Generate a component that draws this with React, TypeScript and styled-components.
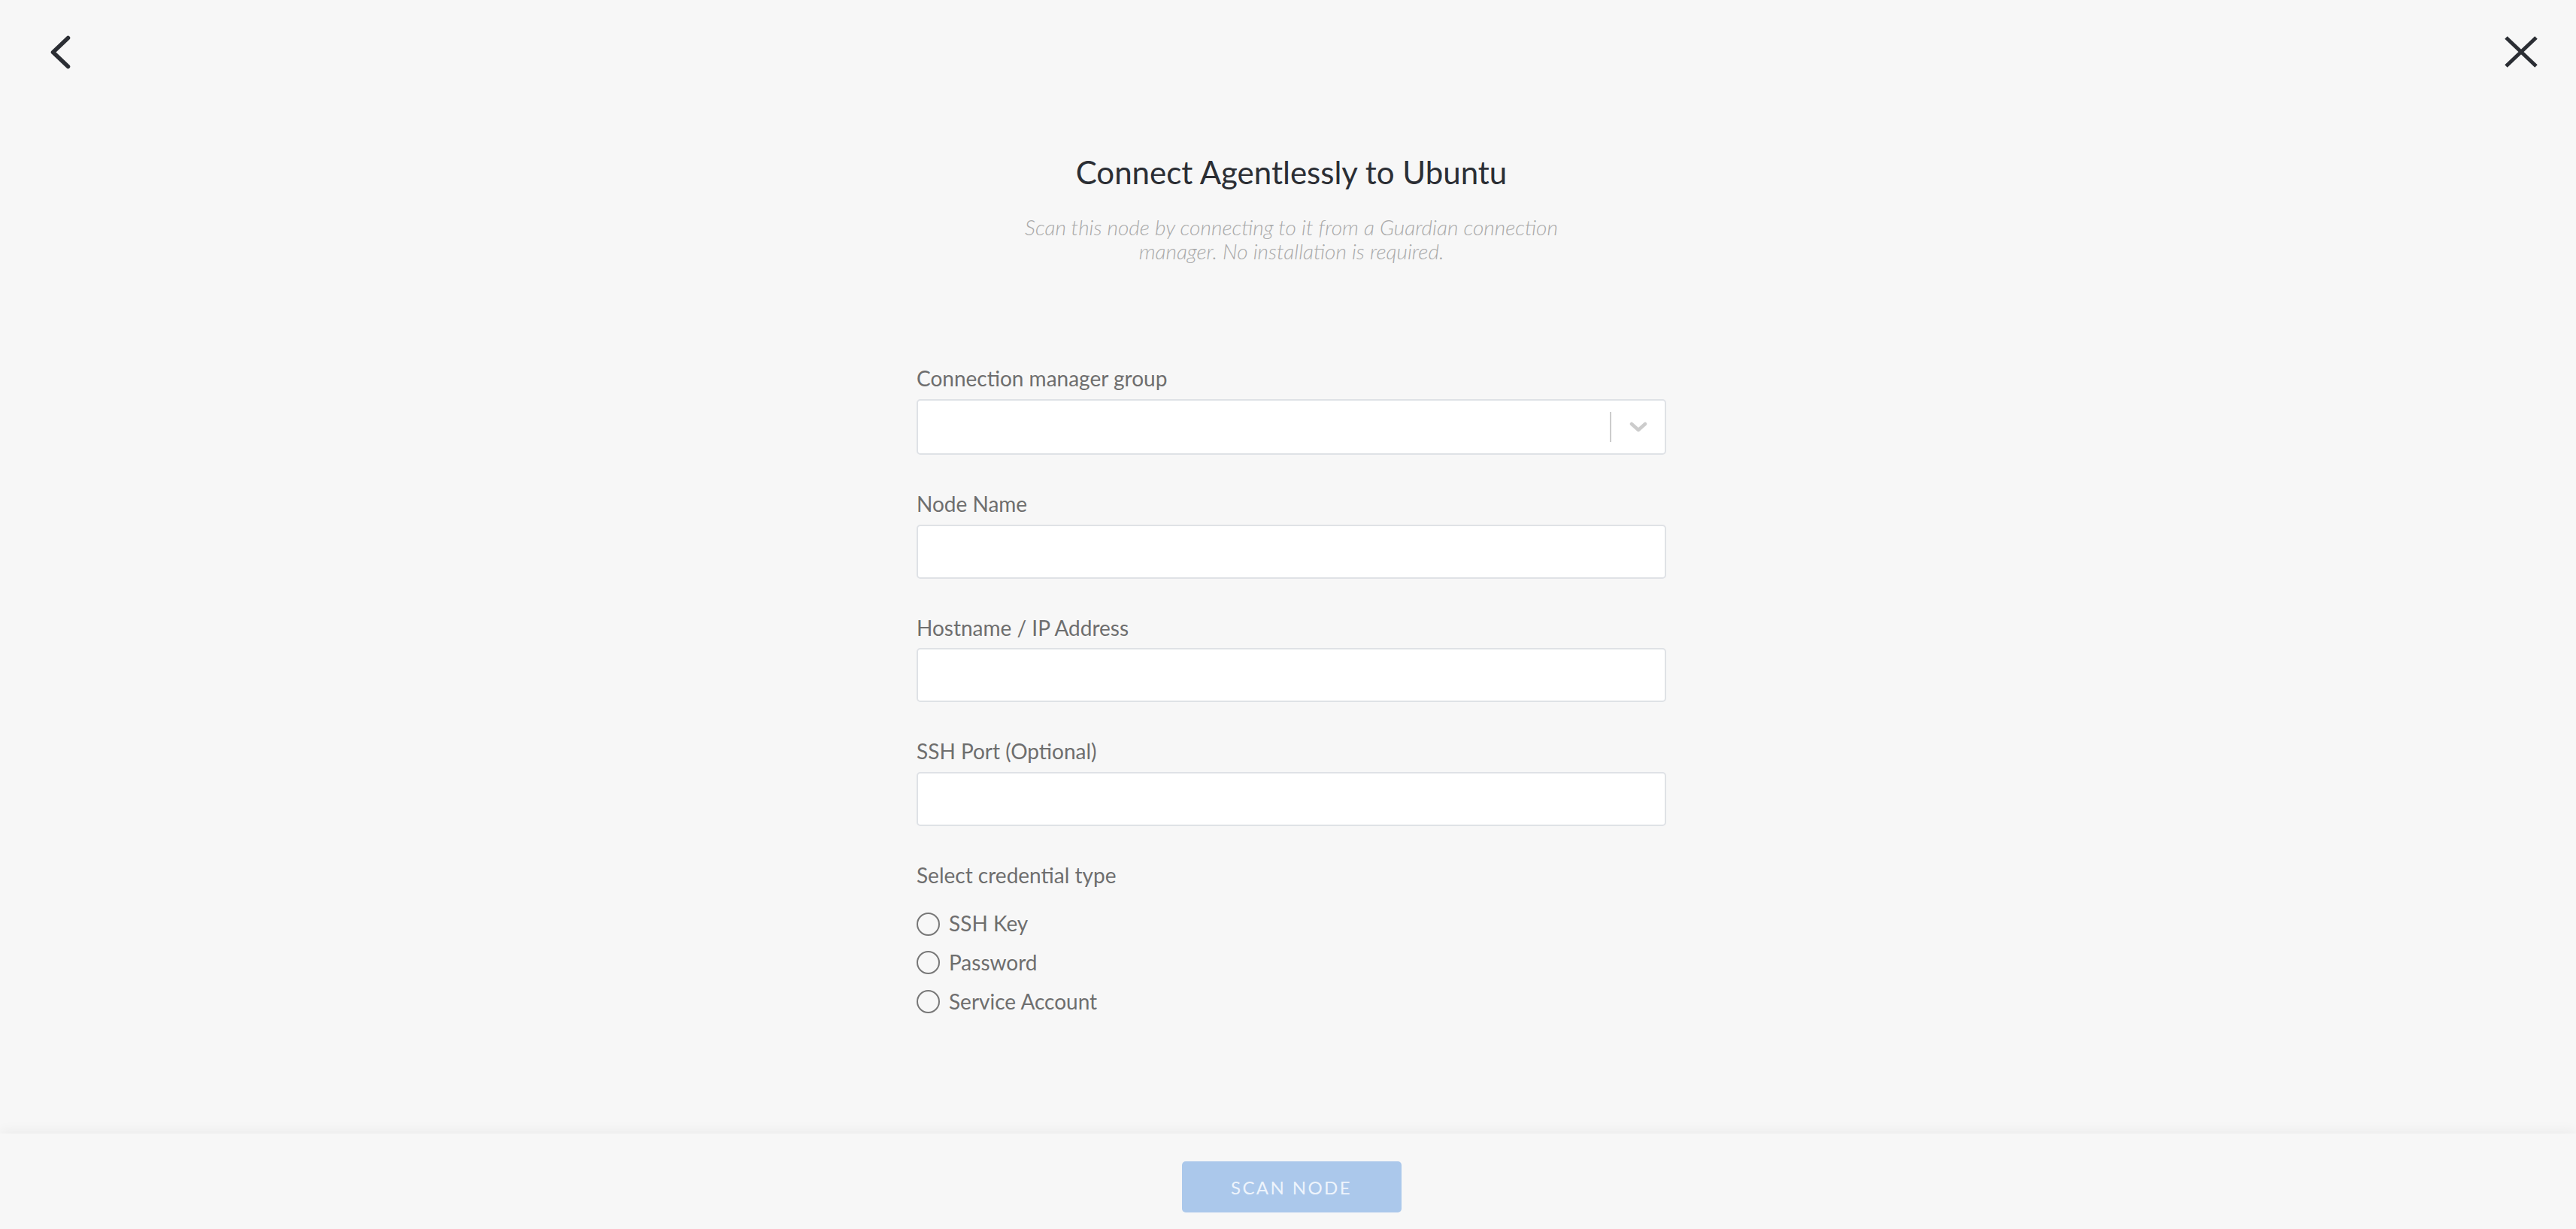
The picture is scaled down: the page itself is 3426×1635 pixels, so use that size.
import React, { useState } from 'react';
import styled, { createGlobalStyle } from 'styled-components';

const GlobalStyle = createGlobalStyle`
  html, body {
    margin: 0;
    padding: 0;
    background: #f7f7f7;
    font-family: Lato, "Open Sans", "Liberation Sans", sans-serif;
  }
  * {
    box-sizing: border-box;
  }
`;

const Page = styled.div`
  height: 100vh;
  display: flex;
  flex-direction: column;
  background: #f7f7f7;
  overflow: hidden;
`;

const Main = styled.main`
  flex: 1;
  overflow: auto;
  padding-left: 9px;
`;

const TopBar = styled.div`
  display: flex;
  justify-content: space-between;
  align-items: flex-start;
  padding: 44px 45px 0 51px;
  height: 96px;
`;

const IconButton = styled.button`
  display: flex;
  padding: 0;
  border: none;
  background: transparent;
  cursor: pointer;
  color: #2b2e34;
`;

const Heading = styled.div`
  display: flex;
  flex-direction: column;
  align-items: center;
  margin-top: 108px;
`;

const Title = styled.h1`
  margin: 0;
  font-size: 42px;
  line-height: 1.2;
  font-weight: 400;
  color: #2b2e34;
`;

const Subtitle = styled.p`
  margin: 32px 0 0;
  max-width: 740px;
  text-align: center;
  font-size: 28px;
  line-height: 32px;
  font-style: italic;
  font-weight: 300;
  color: #a9a9a9;
`;

const Form = styled.form`
  width: 997px;
  margin: 137px auto 0;
  display: flex;
  flex-direction: column;
  gap: 49px;
  padding-bottom: 40px;
`;

const Field = styled.div`
  display: flex;
  flex-direction: column;
  gap: 10px;
`;

const Label = styled.label`
  display: block;
  font-size: 28px;
  line-height: 1.2;
  color: #6e6e6e;
`;

const TextInput = styled.input`
  height: 72px;
  width: 100%;
  border: 2px solid #dfe2e6;
  border-radius: 5px;
  background: #fff;
  padding: 0 20px;
  font-family: inherit;
  font-size: 28px;
  color: #333;
  outline: none;
`;

const SelectBox = styled.div`
  height: 74px;
  display: flex;
  align-items: stretch;
  border: 2px solid #dfe2e6;
  border-radius: 5px;
  background: #fff;
`;

const SelectValue = styled.div`
  flex: 1;
`;

const SelectSeparator = styled.span`
  width: 2px;
  margin: 15px 0;
  background: #cccccc;
`;

const SelectArrow = styled.div`
  display: flex;
  align-items: center;
  padding: 0 23px 0 24px;
  color: #cccccc;
`;

const RadioGroup = styled.div`
  display: flex;
  flex-direction: column;
  gap: 18px;
  margin-top: 31px;
`;

const RadioRow = styled.label`
  display: flex;
  align-items: center;
  gap: 12px;
  font-size: 28px;
  line-height: 1.2;
  color: #6e6e6e;
  cursor: pointer;
`;

const RadioCircle = styled.span<{ $checked: boolean }>`
  width: 31px;
  height: 31px;
  border-radius: 50%;
  border: 2px solid #777777;
  background: ${(p) => (p.$checked ? 'radial-gradient(circle, #4a90e2 0 7px, #fff 8px)' : 'transparent')};
  flex-shrink: 0;
`;

const Footer = styled.footer`
  height: 127px;
  flex-shrink: 0;
  display: flex;
  justify-content: center;
  align-items: flex-start;
  padding-top: 37px;
  padding-left: 9px;
  background: #f7f7f7;
  box-shadow: 0 -5px 14px rgba(0, 0, 0, 0.045);
  position: relative;
`;

const ScanButton = styled.button`
  width: 292px;
  height: 68px;
  border: none;
  border-radius: 5px;
  background: #abc8eb;
  color: #eef4fc;
  font-family: inherit;
  font-size: 24px;
  letter-spacing: 2.4px;
  text-transform: uppercase;
  cursor: not-allowed;
`;

const credentialTypes = ['SSH Key', 'Password', 'Service Account'];

function BackIcon() {
  return (
    <svg width="40" height="52" viewBox="0 0 40 52" fill="none">
      <polyline
        points="30.5,6.5 10.5,25.5 30.5,44.5"
        stroke="currentColor"
        strokeWidth="5.5"
        strokeLinecap="round"
        strokeLinejoin="round"
      />
    </svg>
  );
}

function CloseIcon() {
  return (
    <svg width="56" height="52" viewBox="0 0 56 52" fill="none">
      <path d="M8 6 L48 44 M48 6 L8 44" stroke="currentColor" strokeWidth="5" />
    </svg>
  );
}

function ChevronDown() {
  return (
    <svg width="24" height="14" viewBox="0 0 24 14" fill="none">
      <polyline
        points="3,3 12,11 21,3"
        stroke="currentColor"
        strokeWidth="4.5"
        strokeLinecap="round"
        strokeLinejoin="round"
      />
    </svg>
  );
}

export default function App() {
  const [credential, setCredential] = useState<string | null>(null);

  return (
    <Page>
      <GlobalStyle />
      <Main>
        <TopBar>
          <IconButton aria-label="Back">
            <BackIcon />
          </IconButton>
          <IconButton aria-label="Close">
            <CloseIcon />
          </IconButton>
        </TopBar>

        <Heading>
          <Title>Connect Agentlessly to Ubuntu</Title>
          <Subtitle>
            Scan this node by connecting to it from a Guardian connection manager. No installation is required.
          </Subtitle>
        </Heading>

        <Form onSubmit={(e) => e.preventDefault()}>
          <Field>
            <Label>Connection manager group</Label>
            <SelectBox>
              <SelectValue />
              <SelectSeparator />
              <SelectArrow>
                <ChevronDown />
              </SelectArrow>
            </SelectBox>
          </Field>

          <Field>
            <Label htmlFor="node-name">Node Name</Label>
            <TextInput id="node-name" />
          </Field>

          <Field>
            <Label htmlFor="hostname">Hostname / IP Address</Label>
            <TextInput id="hostname" />
          </Field>

          <Field>
            <Label htmlFor="ssh-port">SSH Port (Optional)</Label>
            <TextInput id="ssh-port" />
          </Field>

          <div>
            <Label>Select credential type</Label>
            <RadioGroup>
              {credentialTypes.map((type) => (
                <RadioRow key={type} onClick={() => setCredential(type)}>
                  <RadioCircle $checked={credential === type} />
                  {type}
                </RadioRow>
              ))}
            </RadioGroup>
          </div>
        </Form>
      </Main>

      <Footer>
        <ScanButton disabled>Scan Node</ScanButton>
      </Footer>
    </Page>
  );
}
